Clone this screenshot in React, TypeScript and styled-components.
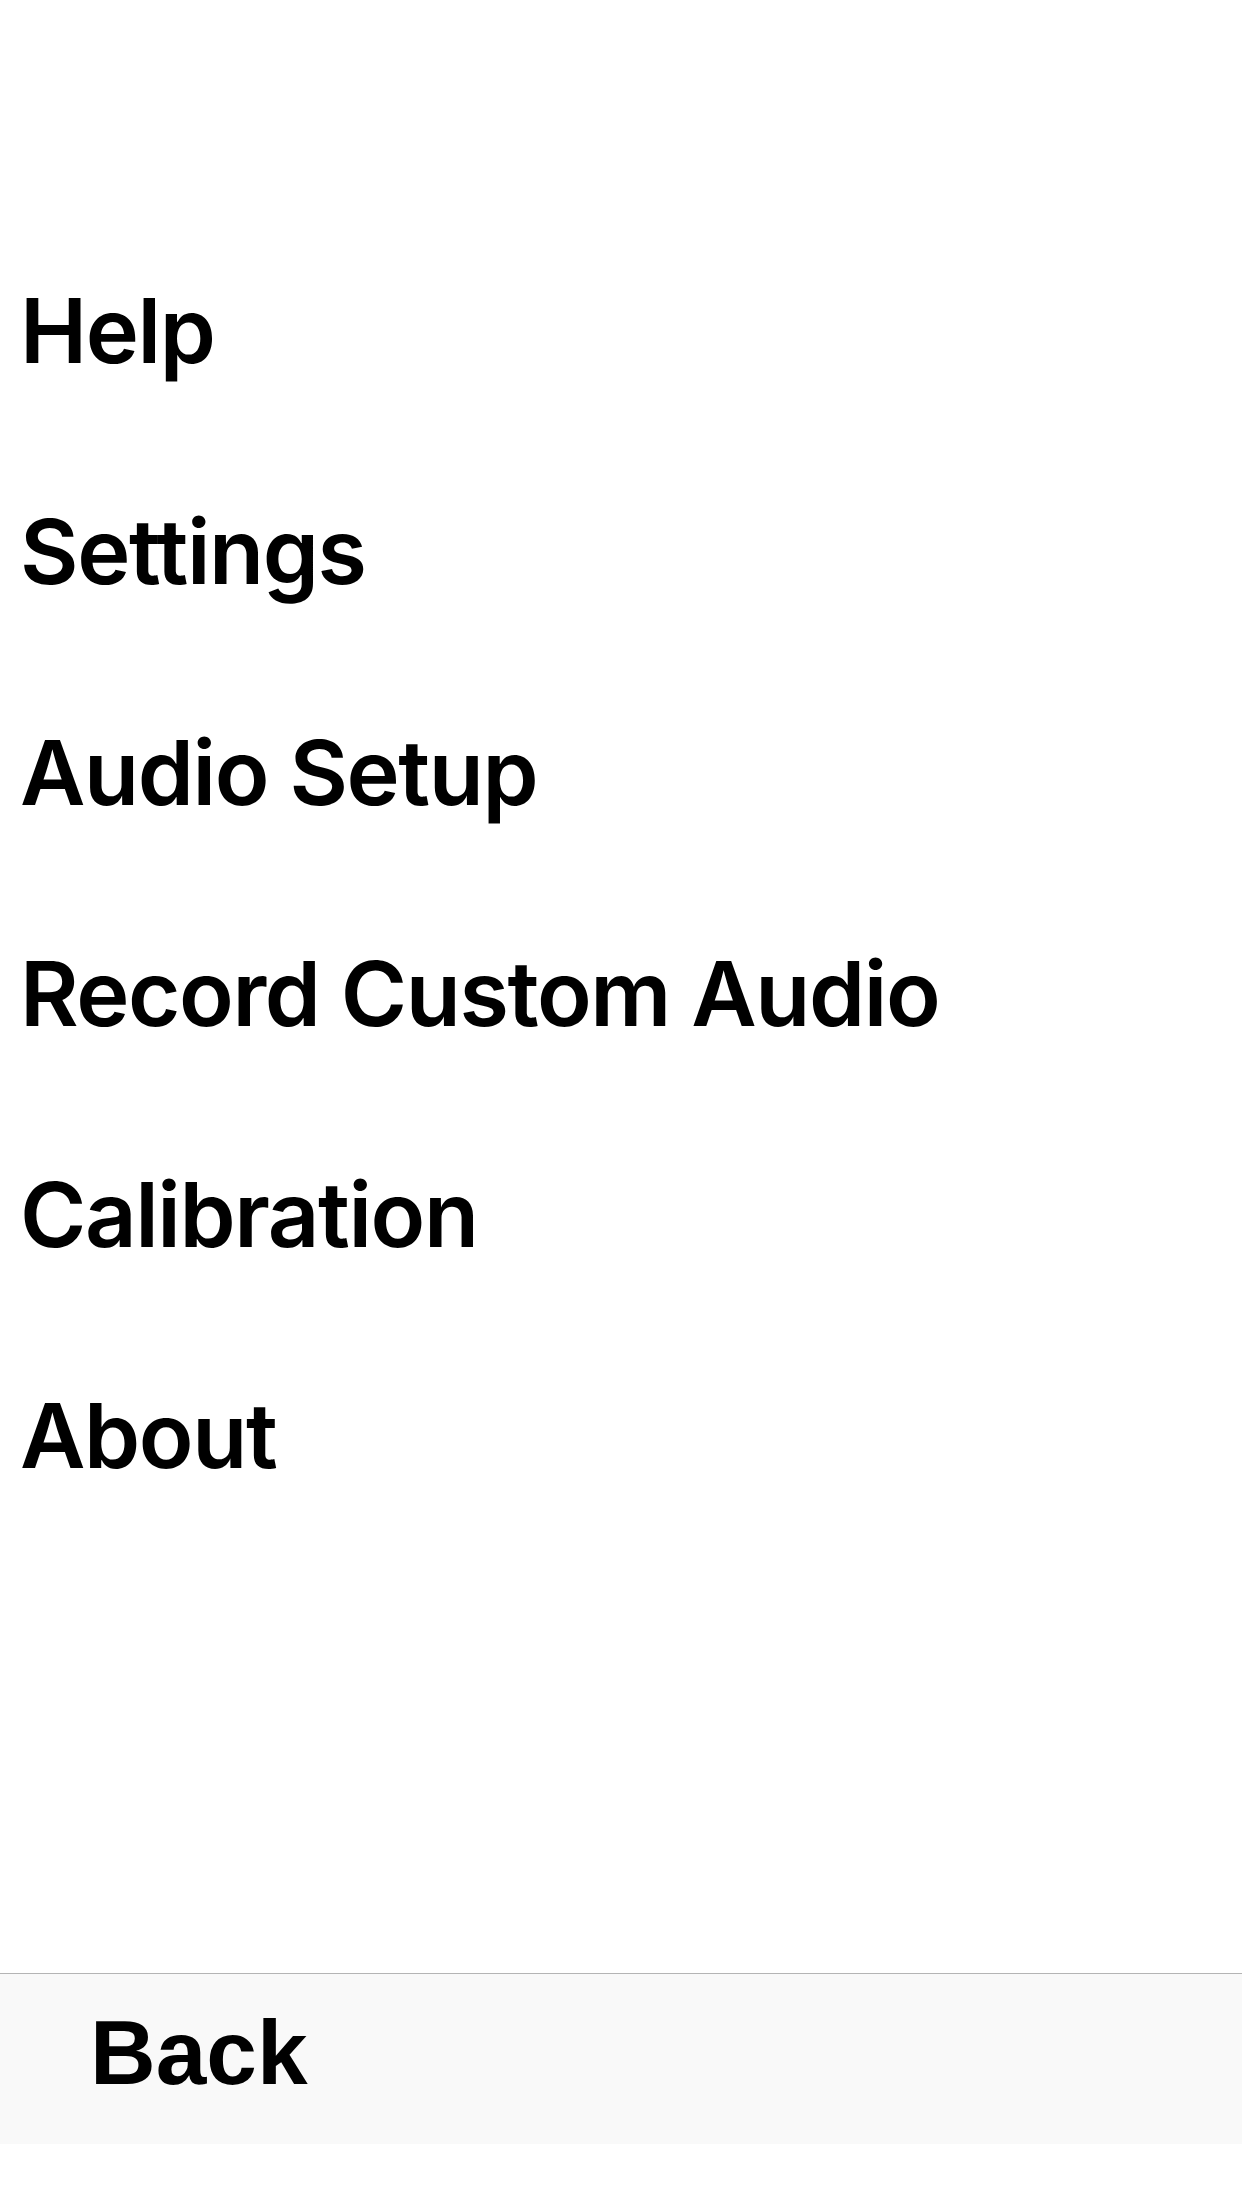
import React from "react";
import styled, { createGlobalStyle } from "styled-components";

const Global = createGlobalStyle`
  html, body { margin: 0; padding: 0; background: #ffffff; }
  #root { min-height: 2208px; }
`;

const Screen = styled.div`
  display: flex;
  flex-direction: column;
  width: 1242px;
  height: 2208px;
  background: #ffffff;
  overflow: hidden;
`;

const Menu = styled.nav`
  display: flex;
  flex-direction: column;
  padding-top: 220px;
`;

const MenuItem = styled.div`
  height: 221px;
  line-height: 221px;
  padding-left: 20px;
  font-family: Inter, "Liberation Sans", sans-serif;
  font-weight: 560;
  font-size: 90px;
  letter-spacing: -1.4px;
  color: #000000;
  white-space: nowrap;
`;

const Spacer = styled.div`
  flex: 1;
`;

const BottomBar = styled.div`
  height: 171px;
  box-sizing: border-box;
  border-top: 1px solid #b4b4b4;
  background: #f9f9f9;
  display: flex;
  align-items: flex-start;
  padding-left: 90px;
  padding-top: 27px;
`;

const BackButton = styled.div`
  font-family: "Liberation Sans", Arial, sans-serif;
  font-weight: 700;
  font-size: 91px;
  line-height: normal;
  color: #000000;
`;

const BottomGap = styled.div`
  height: 64px;
  background: #ffffff;
`;

const items = [
  "Help",
  "Settings",
  "Audio Setup",
  "Record Custom Audio",
  "Calibration",
  "About",
];

export default function App() {
  return (
    <>
      <Global />
      <Screen>
        <Menu>
          {items.map((t) => (
            <MenuItem key={t}>{t}</MenuItem>
          ))}
        </Menu>
        <Spacer />
        <BottomBar>
          <BackButton>Back</BackButton>
        </BottomBar>
        <BottomGap />
      </Screen>
    </>
  );
}
